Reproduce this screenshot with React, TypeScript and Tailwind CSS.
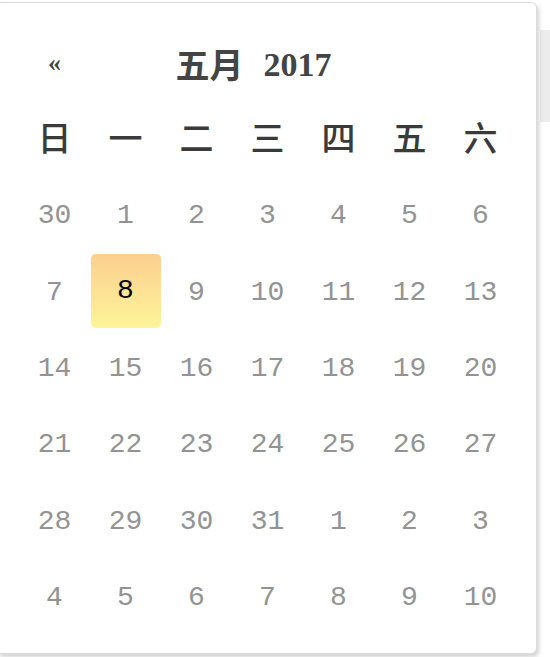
import React from "react"

const weekDays = ["日", "一", "二", "三", "四", "五", "六"]

const weeks: number[][] = [
  [30, 1, 2, 3, 4, 5, 6],
  [7, 8, 9, 10, 11, 12, 13],
  [14, 15, 16, 17, 18, 19, 20],
  [21, 22, 23, 24, 25, 26, 27],
  [28, 29, 30, 31, 1, 2, 3],
  [4, 5, 6, 7, 8, 9, 10],
]

const cjk = { fontFamily: '"Noto Sans CJK SC", "Noto Sans CJK JP", sans-serif' }

export default function App() {
  return (
    <div className="relative w-[550px] h-[657px] overflow-hidden bg-white">
      {/* input edge peeking out behind the dropdown */}
      <div className="absolute right-0 top-[30px] h-[92px] w-[10px] bg-[#ececec]" />

      <div className="relative ml-[-4px] mt-[2px] w-[541px] h-[652px] rounded-md border border-[#dcdcdc] bg-white px-[22px] pt-[22px] shadow-[2px_3px_4px_rgba(0,0,0,0.18)]">
        <div className="grid grid-cols-[repeat(7,71px)] grid-rows-[76px_77px_repeat(6,76.4px)]">
          {/* header */}
          <div className="flex items-center justify-center text-[#444] text-[26px] font-bold font-['Liberation_Serif',serif] pb-[2px]">
            «
          </div>
          <div className="col-span-5 flex items-center justify-center gap-[20px] pr-[28px] text-[#444]">
            <span className="text-[34px] font-semibold" style={cjk}>五月</span>
            <span className="text-[34px] font-bold font-['Liberation_Serif',serif] pt-[2px]">2017</span>
          </div>
          <div />

          {weekDays.map((d) => (
            <div
              key={d}
              className="flex items-center justify-center pb-[6px] text-[34px] font-medium text-[#3a3a3a]"
              style={cjk}
            >
              {d}
            </div>
          ))}

          {weeks.flat().map((n, i) => {
            const today = i === 8
            return (
              <div key={i} className="flex items-center justify-center">
                <div
                  className={
                    today
                      ? "flex h-[74px] w-[70px] mt-[-3px] items-center justify-center rounded-[5px] bg-gradient-to-b from-[#fbcf8f] to-[#fdf49a] text-black font-['Liberation_Mono',monospace] text-[28px]"
                      : "flex h-[74px] w-[70px] items-center justify-center text-[#939393] font-['Liberation_Mono',monospace] text-[28px]"
                  }
                >
                  {n}
                </div>
              </div>
            )
          })}
        </div>
      </div>
    </div>
  )
}
